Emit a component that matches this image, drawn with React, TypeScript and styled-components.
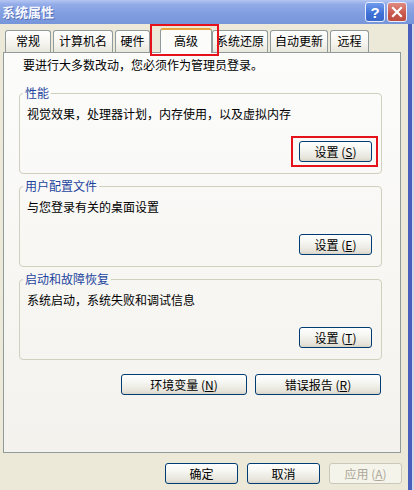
import React from "react";
import styled, { createGlobalStyle, css } from "styled-components";

const GlobalStyle = createGlobalStyle`
  html, body { margin: 0; padding: 0; background: #ece9d8; }
  body {
    font-family: "Noto Sans CJK SC", "Liberation Sans", sans-serif;
    font-size: 12px;
    color: #000;
  }
  * { box-sizing: border-box; }
`;

const Window = styled.div`
  width: 414px;
  height: 490px;
  display: flex;
  flex-direction: column;
  background: #ece9d8;
  overflow: hidden;
`;

const TitleBar = styled.div`
  height: 24px;
  flex: none;
  display: flex;
  align-items: center;
  padding: 0 7px 0 2px;
  background: linear-gradient(to bottom, #b4c6f2 0%, #93ace8 18%, #819ee0 55%, #7695da 100%);
`;

const TitleText = styled.div`
  flex: 1;
  font-size: 13px;
  font-weight: bold;
  line-height: 16px;
  color: #f4f7ff;
  text-shadow: 1px 1px 0 #5670b8;
`;

const CaptionButton = styled.div<{ $kind: "help" | "close" }>`
  width: 20px;
  height: 20px;
  margin-left: 2px;
  border: 1px solid #e8eefc;
  border-radius: 3px;
  display: grid;
  place-items: center;
  color: #fff;
  font-family: "Liberation Sans", sans-serif;
  font-weight: bold;
  font-size: 15px;
  line-height: 1;
  ${(p) =>
    p.$kind === "help"
      ? css`background: linear-gradient(to bottom, #6f9bec, #3f70d6 60%, #3a68cc);`
      : css`background: linear-gradient(to bottom, #e08a80, #c9574b 60%, #bd4c41);`}
`;

const Frame = styled.div`
  flex: 1;
  display: flex;
  min-height: 0;
`;

const Body = styled.div`
  flex: 1;
  min-width: 0;
  display: flex;
  flex-direction: column;
  padding: 4px 6px 6px 3px;
`;

const RightEdge = styled.div`
  width: 6px;
  flex: none;
  background: linear-gradient(to right, #4a5fbd 0 4px, #d3d8ec 4px);
`;

const TabStrip = styled.div`
  height: 25px;
  margin-bottom: -1px;
  display: flex;
  align-items: flex-start;
  gap: 2px;
  padding-left: 2px;
  position: relative;
  z-index: 1;
`;

const Tab = styled.div<{ $w: number; $active?: boolean }>`
  position: relative;
  width: ${(p) => p.$w}px;
  flex: none;
  border: 1px solid #919b9c;
  border-bottom: none;
  border-radius: 3px 3px 0 0;
  text-align: center;
  ${(p) =>
    p.$active
      ? css`
          height: 25px;
          margin-left: 8px;
          margin-right: -2px;
          line-height: 21px;
          border-top: 2px solid #e9a53c;
          background: #fcfcfb;
        `
      : css`
          height: 22px;
          margin-top: 2px;
          line-height: 20px;
          background: linear-gradient(to bottom, #ffffff, #f6f5f0 55%, #e9e7dc);
        `}
`;

const Highlight = styled.span<{ $l: number; $t: number; $w: number; $h: number }>`
  position: absolute;
  left: ${(p) => p.$l}px;
  top: ${(p) => p.$t}px;
  width: ${(p) => p.$w}px;
  height: ${(p) => p.$h}px;
  border: 2px solid #e6121b;
  pointer-events: none;
  z-index: 3;
`;

const Panel = styled.div`
  flex: 1;
  margin-right: 1px;
  border: 1px solid #919b9c;
  background: linear-gradient(to bottom, #fcfcfb, #f3f2ed);
  padding: 5px 18px 0 15px;
  display: flex;
  flex-direction: column;
`;

const Intro = styled.p`
  margin: 0 0 14px 4px;
  line-height: 14px;
`;

const Groups = styled.div`
  display: flex;
  flex-direction: column;
  gap: 5px;
`;

const GroupBox = styled.fieldset`
  margin: 0;
  min-width: 0;
  border: 1px solid #d0d0bf;
  border-radius: 4px;
  padding: 7px 9px 11px 7px;
  display: flex;
  flex-direction: column;
`;

const GroupLabel = styled.legend`
  padding: 0 2px;
  margin-left: -4px;
  font-size: 12px;
  line-height: 14px;
  color: #1d449e;
`;

const Desc = styled.div`
  line-height: 14px;
`;

const ButtonRow = styled.div<{ $top: number; $gap: number; $right?: number }>`
  display: flex;
  justify-content: flex-end;
  gap: ${(p) => p.$gap}px;
  margin-top: ${(p) => p.$top}px;
  padding-right: ${(p) => p.$right ?? 0}px;
`;

const XPButton = styled.button<{ $w: number }>`
  position: relative;
  width: ${(p) => p.$w}px;
  height: 21px;
  padding: 0;
  border: 1px solid #003c74;
  border-radius: 3px;
  background: linear-gradient(to bottom, #ffffff, #f5f5f1 40%, #e6e4da 85%, #d8d3c7);
  font-family: "Noto Sans CJK SC", "Liberation Sans", sans-serif;
  font-size: 12px;
  line-height: 19px;
  color: #000;
  text-align: center;
  &:disabled {
    border-color: #cac8bb;
    background: #f5f4ea;
    color: #aca899;
  }
`;

const Key = styled.u`
  text-decoration: underline;
  text-underline-offset: 1px;
`;

const tabs = [
  { label: "常规", w: 46 },
  { label: "计算机名", w: 60 },
  { label: "硬件", w: 35 },
  { label: "高级", w: 52, active: true },
  { label: "系统还原", w: 56 },
  { label: "自动更新", w: 58 },
  { label: "远程", w: 39 },
];

const groups = [
  { title: "性能", desc: "视觉效果，处理器计划，内存使用，以及虚拟内存", key: "S", mark: true },
  { title: "用户配置文件", desc: "与您登录有关的桌面设置", key: "E" },
  { title: "启动和故障恢复", desc: "系统启动，系统失败和调试信息", key: "T" },
];

export default function App() {
  return (
    <>
      <GlobalStyle />
      <Window>
        <TitleBar>
          <TitleText>系统属性</TitleText>
          <CaptionButton $kind="help">?</CaptionButton>
          <CaptionButton $kind="close">
            <svg width="12" height="12" viewBox="0 0 12 12">
              <path d="M2 2 L10 10 M10 2 L2 10" stroke="#fff" strokeWidth="2.2" strokeLinecap="square" />
            </svg>
          </CaptionButton>
        </TitleBar>
        <Frame>
          <Body>
            <TabStrip>
              {tabs.map((t) => (
                <Tab key={t.label} $w={t.w} $active={t.active}>
                  {t.label}
                  {t.active && <Highlight $l={-11} $t={-6} $w={69} $h={32} />}
                </Tab>
              ))}
            </TabStrip>
            <Panel>
              <Intro>要进行大多数改动，您必须作为管理员登录。</Intro>
              <Groups>
                {groups.map((g) => (
                  <GroupBox key={g.title}>
                    <GroupLabel>{g.title}</GroupLabel>
                    <Desc>{g.desc}</Desc>
                    <ButtonRow $top={20} $gap={0}>
                      <XPButton $w={73}>
                        设置 (<Key>{g.key}</Key>)
                        {g.mark && <Highlight $l={-9} $t={-6} $w={87} $h={31} />}
                      </XPButton>
                    </ButtonRow>
                  </GroupBox>
                ))}
              </Groups>
              <ButtonRow $top={14} $gap={8} $right={1}>
                <XPButton $w={126}>
                  环境变量 (<Key>N</Key>)
                </XPButton>
                <XPButton $w={126}>
                  错误报告 (<Key>R</Key>)
                </XPButton>
              </ButtonRow>
            </Panel>
            <ButtonRow $top={10} $gap={9}>
              <XPButton $w={73}>确定</XPButton>
              <XPButton $w={73}>取消</XPButton>
              <XPButton $w={73} disabled>
                应用 (<Key>A</Key>)
              </XPButton>
            </ButtonRow>
          </Body>
          <RightEdge />
        </Frame>
      </Window>
    </>
  );
}
